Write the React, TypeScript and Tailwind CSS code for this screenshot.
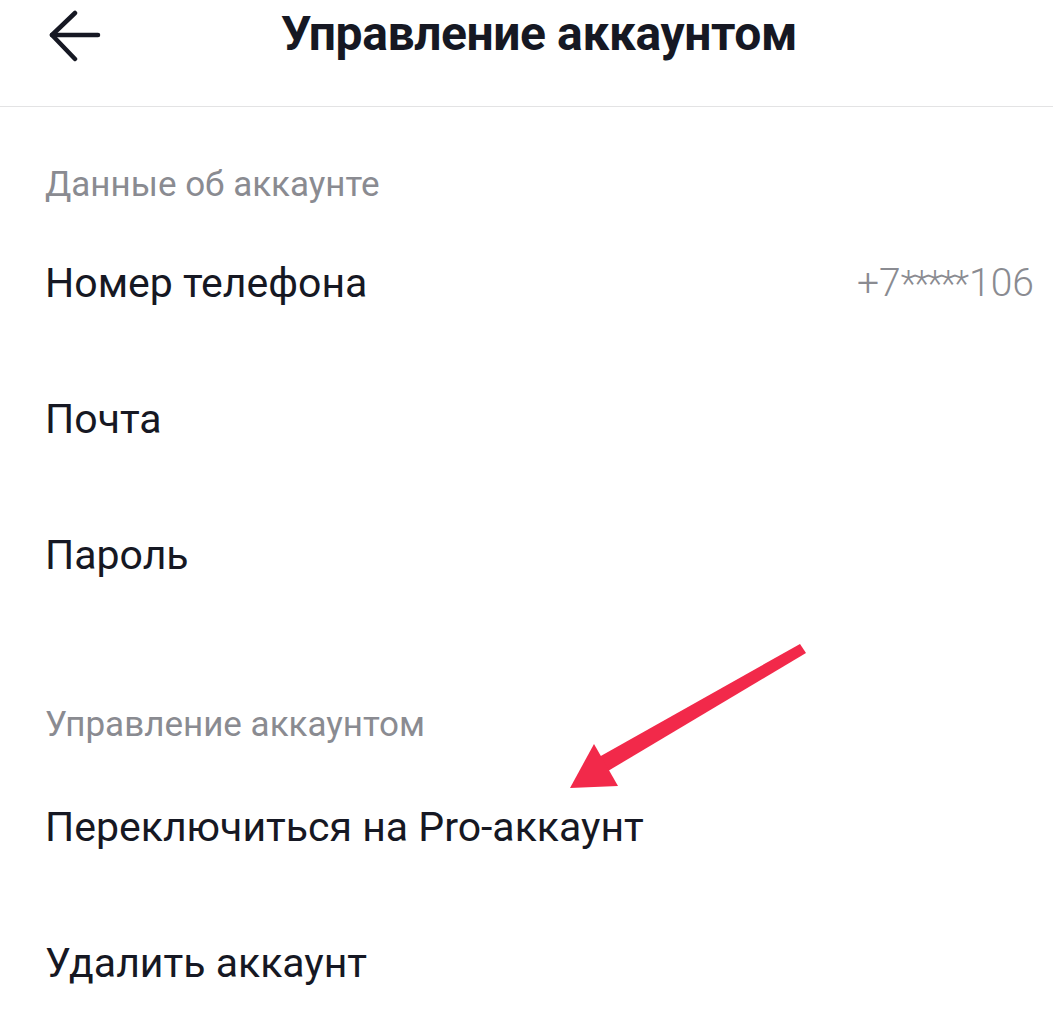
import React from "react";

function Row({ label, value }: { label: string; value?: React.ReactNode }) {
  return (
    <div className="h-[136px] flex items-center justify-between">
      <span className="text-[41px] leading-[48px] text-[#161823]">{label}</span>
      {value}
    </div>
  );
}

export default function App() {
  return (
    <div className="relative w-[1053px] h-[1036px] bg-white overflow-hidden" style={{ fontFamily: "Roboto, 'Noto Sans', sans-serif" }}>
      <div className="h-[107px] border-b border-[#e3e3e4] relative flex items-center justify-center">
        <svg className="absolute left-[48px] top-[10px]" width="56" height="52" viewBox="0 0 56 52" fill="none" stroke="#161823" strokeWidth="4.5" strokeLinecap="round" strokeLinejoin="round">
          <path d="M27 3 L4 25 L27 49" />
          <path d="M4 25 L50 25" />
        </svg>
        <h1 className="text-[48px] leading-[56px] font-bold text-[#161823] -mt-[38px] ml-[25px] tracking-[-0.4px]">Управление аккаунтом</h1>
      </div>
      <div className="px-[45px] pr-[19px]">
        <div className="pt-[58px] pb-[10px]">
          <div className="text-[35px] leading-[40px] text-[#8a8b91]">Данные об аккаунте</div>
        </div>
        <Row
          label="Номер телефона"
          value={
            <span className="text-[39px] leading-[48px] font-light text-[#8a8b91]">
              +7<span className="tracking-[-2px] text-[36px]">*****</span>
              <span className="ml-[2px]">106</span>
            </span>
          }
        />
        <Row label="Почта" />
        <Row label="Пароль" />
        <div className="pt-[82px] pb-[14px]">
          <div className="text-[35px] leading-[40px] text-[#8a8b91]">Управление аккаунтом</div>
        </div>
        <Row label="Переключиться на Pro-аккаунт" />
        <Row label="Удалить аккаунт" />
      </div>
      <svg className="absolute left-0 top-0 pointer-events-none" width="1053" height="1036" viewBox="0 0 1053 1036">
        <polygon points="800,644 806,653 608,771 599,757" fill="#f2294a" />
        <polygon points="570,788 594,744 618,786" fill="#f2294a" />
      </svg>
    </div>
  );
}
